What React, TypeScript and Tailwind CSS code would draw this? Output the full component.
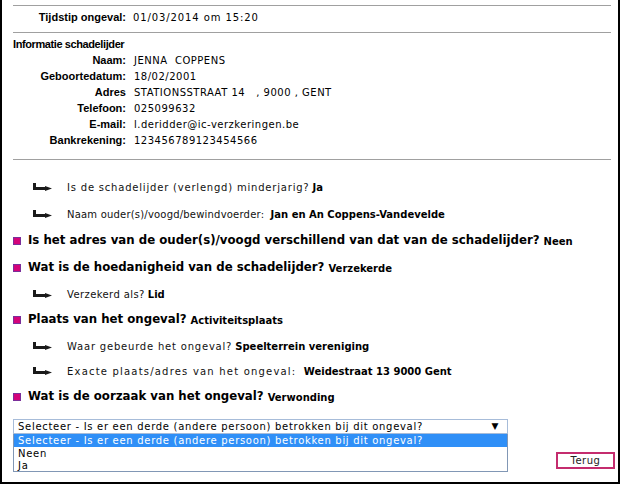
import React from 'react';

const info: [string, string][] = [
  ['Naam:', 'JENNA  COPPENS'],
  ['Geboortedatum:', '18/02/2001'],
  ['Adres', 'STATIONSSTRAAT 14   , 9000 , GENT'],
  ['Telefoon:', '025099632'],
  ['E-mail:', 'l.deridder@ic-verzkeringen.be'],
  ['Bankrekening:', '123456789123454566'],
];

function Hook() {
  return (
    <svg width="19" height="9" viewBox="0 0 19 9" className="shrink-0">
      <path d="M1.5 0 V6" stroke="#1a1a1a" strokeWidth="3" />
      <path d="M0 5.5 H13" stroke="#1a1a1a" strokeWidth="3" />
      <path d="M12 3 L19 5.5 L12 8 Z" fill="#1a1a1a" />
    </svg>
  );
}

function Sub({ q, a, mt, wide = 'tracking-[0.8px]' }: { q: string; a: string; mt: string; wide?: string }) {
  return (
    <div className={`flex h-[16px] items-center pl-[20px] ${mt}`}>
      <Hook />
      <span className={`ml-[15px] whitespace-pre text-[10px] text-[#111] ${wide}`}>{q}</span>
      <span className="ml-[3px] text-[10px] font-bold">{a}</span>
    </div>
  );
}

function Question({ q, a, mt }: { q: string; a: string; mt: string }) {
  return (
    <div className={`flex h-[16px] items-center ${mt}`}>
      <span className="h-[8px] w-[8px] shrink-0 border border-[#7a2f9a] bg-[#d4037a]" />
      <span className="ml-[7px] text-[11.75px] font-bold">{q}</span>
      <span className="ml-[4px] text-[10px] font-bold">{a}</span>
    </div>
  );
}

export default function App() {
  return (
    <div className="h-[484px] w-[624px] bg-white font-['DejaVu_Sans',sans-serif] text-black">
      <div className="flex h-[484px] w-[620px] flex-col border-x-2 border-b-2 border-black pl-[11px] pr-[7px]">
        <div className="mt-[5px] h-px bg-[#a0a0a0]" />
        <div className="mt-[3px] flex h-[16px] items-center">
          <span className="w-[113px] pl-[24px] text-right font-['Liberation_Sans',sans-serif] text-[11px] font-bold">
            Tijdstip ongeval:
          </span>
          <span className="ml-[7px] text-[10px] tracking-[0.9px]">01/03/2014 om 15:20</span>
        </div>
        <div className="mt-[7px] h-px bg-[#a0a0a0]" />
        <div className="mt-[3px] flex h-[16px] items-center font-['Liberation_Sans',sans-serif] text-[11px] font-bold tracking-[-0.4px]">
          Informatie schadelijder
        </div>
        {info.map(([k, v]) => (
          <div key={k} className="flex h-[16px] items-center">
            <span className="w-[113px] text-right font-['Liberation_Sans',sans-serif] text-[11px] font-bold">{k}</span>
            <span className="ml-[8px] whitespace-pre text-[10px] tracking-[0.5px]">{v}</span>
          </div>
        ))}
        <div className="mt-[11px] h-px bg-[#a0a0a0]" />

        <Sub mt="mt-[19px]" q="Is de schadelijder (verlengd) minderjarig?" a="Ja" />
        <Sub
          mt="mt-[11px]"
          wide="tracking-[0.2px]"
          q="Naam ouder(s)/voogd/bewindvoerder: "
          a="Jan en An Coppens-Vandevelde"
        />
        <Question
          mt="mt-[11px]"
          q="Is het adres van de ouder(s)/voogd verschillend van dat van de schadelijder?"
          a="Neen"
        />
        <Question mt="mt-[11px]" q="Wat is de hoedanigheid van de schadelijder?" a="Verzekerde" />
        <Sub mt="mt-[10px]" wide="tracking-[0.4px]" q="Verzekerd als?" a="Lid" />
        <Question mt="mt-[10px]" q="Plaats van het ongeval?" a="Activiteitsplaats" />
        <Sub mt="mt-[10px]" q="Waar gebeurde het ongeval?" a="Speelterrein vereniging" />
        <Sub
          mt="mt-[9px]"
          wide="tracking-[1.2px]"
          q="Exacte plaats/adres van het ongeval: "
          a="Weidestraat 13 9000 Gent"
        />
        <Question mt="mt-[10px]" q="Wat is de oorzaak van het ongeval?" a="Verwonding" />

        <div className="mt-[14px] -mr-[4px] flex items-end">
          <div className="flex w-[495px] flex-col text-[10px] tracking-[0.7px]">
            <div className="flex h-[15px] items-center border border-[#a7bcd9] pl-[4px] pr-[8px]">
              <span className="flex-1">Selecteer - Is er een derde (andere persoon) betrokken bij dit ongeval?</span>
              <span className="text-[9px]">▼</span>
            </div>
            <div className="flex flex-col border border-t-0 border-[#8197b5]">
              <div className="flex h-[13px] items-center bg-[#2f8ff7] pl-[4px] text-white">
                Selecteer - Is er een derde (andere persoon) betrokken bij dit ongeval?
              </div>
              <div className="flex h-[12px] items-center pl-[4px]">Neen</div>
              <div className="flex h-[12px] items-center pl-[4px]">Ja</div>
            </div>
          </div>
          <button
            type="button"
            className="mb-[3px] ml-auto flex h-[17px] w-[59px] items-center justify-center border-2 border-[#c42c6e] bg-white text-[10px] tracking-[0.5px] text-[#222]"
          >
            Terug
          </button>
        </div>
      </div>
    </div>
  );
}
